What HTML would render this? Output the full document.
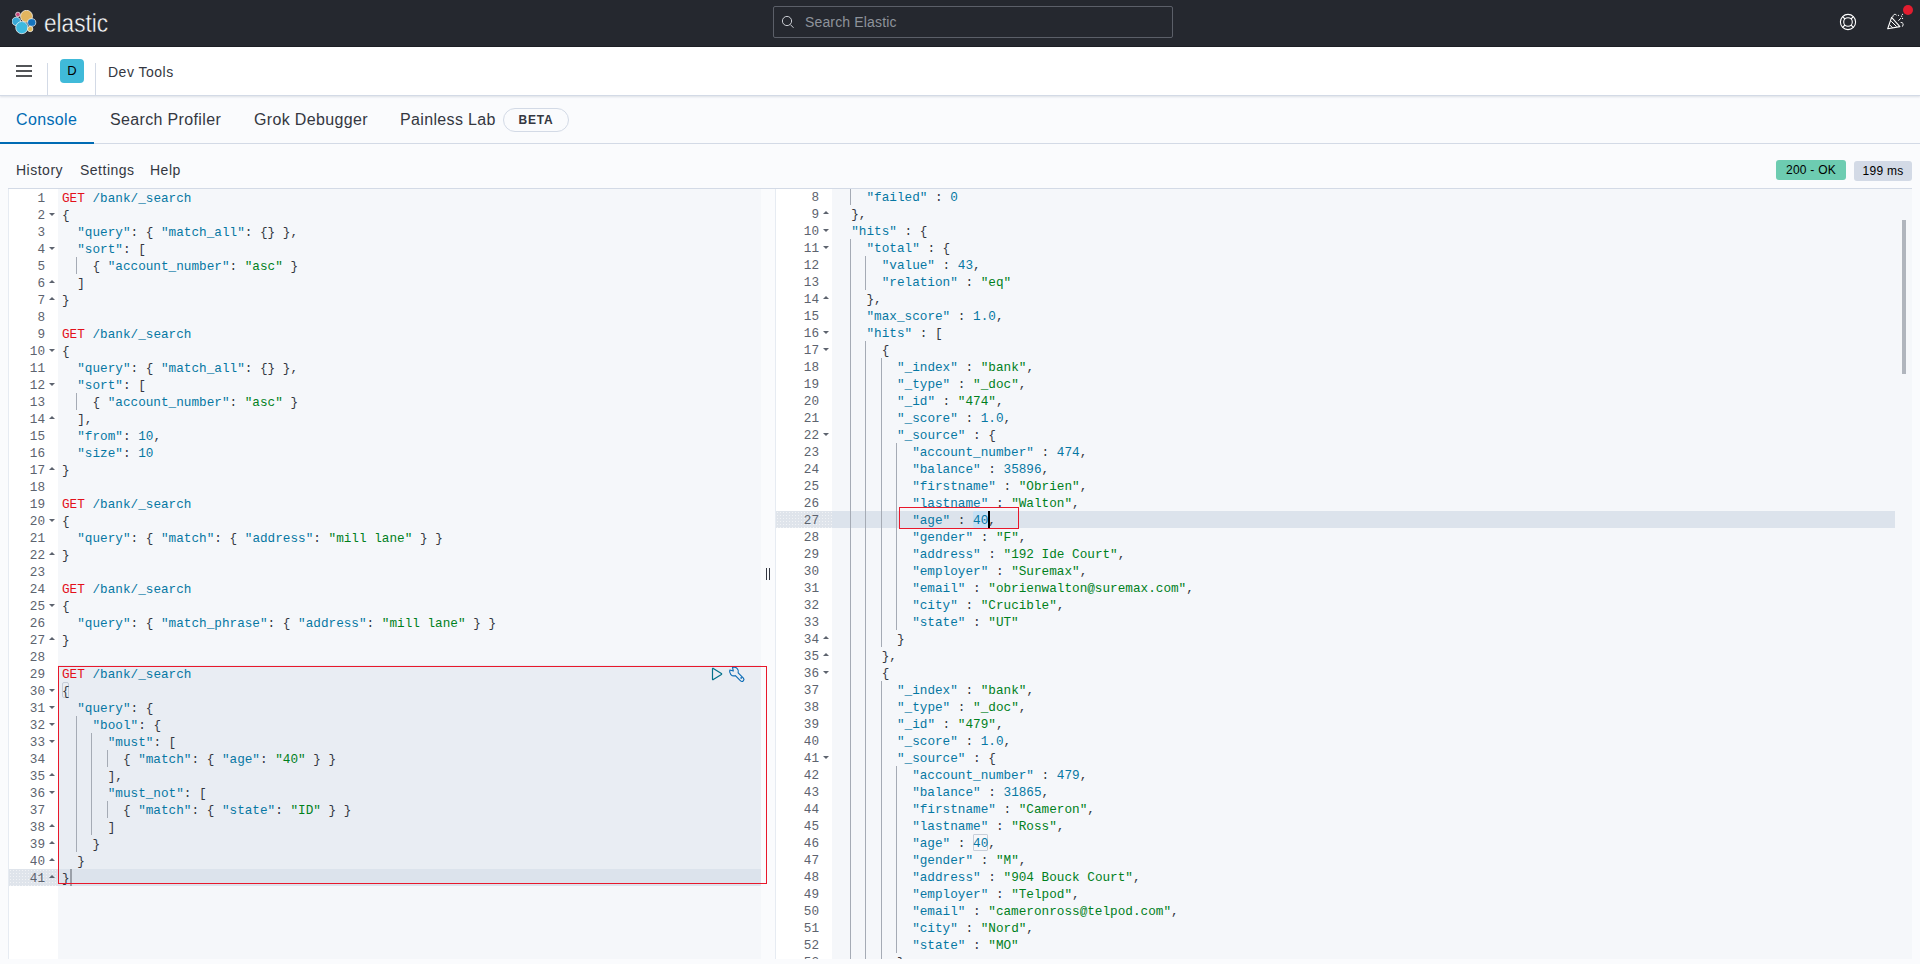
<!DOCTYPE html>
<html><head><meta charset="utf-8">
<style>
*{box-sizing:border-box;margin:0;padding:0}
html,body{width:1920px;height:964px;overflow:hidden;background:#fafbfd;font-family:"Liberation Sans",sans-serif;color:#343741}
.abs{position:absolute}
#hdr{position:absolute;left:0;top:0;width:1920px;height:47px;background:#25282f;border-bottom:1px solid #1a1c21}
#search{position:absolute;left:773px;top:6px;width:400px;height:32px;border:1px solid #5b5f68;border-radius:2px}
#search span{position:absolute;left:31px;top:7px;font-size:14px;letter-spacing:0.15px;color:#8e939b}
#sub{position:absolute;left:0;top:47px;width:1920px;height:49px;background:#fff;border-bottom:1px solid #d3dae6;box-shadow:0 1px 2px rgba(152,162,179,.3)}
.sep{position:absolute;top:16px;width:1px;height:32px;background:#d3dae6}
#tabs div{position:absolute;top:111px;font-size:16px;letter-spacing:0.35px;white-space:nowrap;color:#343741}
.menu{position:absolute;top:162px;font-size:14px;letter-spacing:0.5px;color:#343741;white-space:nowrap}
.badge{position:absolute;font-size:12px;letter-spacing:0.25px;color:#000;text-align:center;border-radius:3px}
.pane{position:absolute;top:189px;height:770px;overflow:hidden}
.gut{position:absolute;left:0;top:0;height:100%;background:#fff}
.code{position:absolute;top:0;height:100%;background:#f5f7fa}
.gl{position:absolute;left:0;width:100%;height:17px;line-height:17px;padding-top:1px;font-family:"Liberation Mono",monospace;font-size:12.7px;color:#5d636e;text-align:right;padding-right:13px}
.gl i{position:absolute;right:3.5px;top:7px;width:0;height:0;border-left:3px solid transparent;border-right:3px solid transparent}
.gl i.fd{border-top:3px solid #5d636e}
.gl i.fu{border-bottom:3px solid #5d636e;top:6px}
.cl{position:absolute;left:4px;height:17px;line-height:17px;padding-top:1px;font-family:"Liberation Mono",monospace;font-size:12.7px;white-space:pre;color:#343741}
.ig{position:absolute;width:1px;height:17px;background:#a5abb5;margin-left:4px}
.tm{color:#e3101a}
.tu,.tk,.tn,.tb{color:#0677a3}
.ts{color:#00801c}

.gdots{background-color:#dfe4eb;background-image:radial-gradient(circle,rgba(255,255,255,.55) 0.6px,transparent 0.9px);background-size:3px 3px}
</style></head><body>
<div id="hdr">
  <svg class="abs" style="left:12px;top:10px" width="26" height="26" viewBox="0 0 26 26">
    <circle cx="14.5" cy="6.3" r="6" fill="#e2b55f" stroke="#fff" stroke-width="0.7"/>
    <ellipse cx="4.3" cy="11.4" rx="4.3" ry="4.2" fill="#38a8d6" stroke="#fff" stroke-width="0.7"/>
    <ellipse cx="19.7" cy="12.5" rx="4.1" ry="3.8" fill="#1473bc" stroke="#fff" stroke-width="0.7"/>
    <circle cx="9.8" cy="17.6" r="6.1" fill="#3db9df" stroke="#fff" stroke-width="0.7"/>
    <circle cx="5.9" cy="4.5" r="2.3" fill="#c5467b" stroke="#fff" stroke-width="0.7"/>
    <circle cx="18.2" cy="19" r="2.7" fill="#dcb75a" stroke="#fff" stroke-width="0.7"/>
  </svg>
  <svg class="abs" style="left:44px;top:8px" width="70" height="30"><text x="0" y="24" font-family="Liberation Sans" font-size="26" fill="#fff" stroke="#25282f" stroke-width="0.45" textLength="64" lengthAdjust="spacingAndGlyphs">elastic</text></svg>
  <div id="search">
    <svg class="abs" style="left:7px;top:8px" width="14" height="14" viewBox="0 0 14 14"><circle cx="6" cy="6" r="4.6" fill="none" stroke="#c9ccd2" stroke-width="1"/><path d="M9.3 9.5 L12.5 12.8" stroke="#c9ccd2" stroke-width="1"/></svg>
    <span>Search Elastic</span>
  </div>
  <svg class="abs" style="left:1839px;top:13px" width="18" height="18" viewBox="0 0 18 18">
    <circle cx="9" cy="9" r="7.6" fill="none" stroke="#fff" stroke-width="1.1"/>
    <circle cx="9" cy="9" r="4.3" fill="none" stroke="#fff" stroke-width="1.1"/>
    <path d="M3.6 3.6 L6 6 M14.4 3.6 L12 6 M3.6 14.4 L6 12 M14.4 14.4 L12 12" stroke="#fff" stroke-width="1.1"/>
  </svg>
  <svg class="abs" style="left:1886px;top:12px" width="20" height="20" viewBox="0 0 20 20">
    <path d="M5.6 5.4 L1.7 16.7 L13.9 14.6 Z" fill="none" stroke="#fff" stroke-width="1.1" stroke-linejoin="round"/>
    <path d="M5.2 9.2 L10.6 14.6 M3.7 12.9 L6.8 15.9" stroke="#fff" stroke-width="1"/>
    <path d="M6.6 5.2 Q7.8 0.6 10.6 3.2" fill="none" stroke="#fff" stroke-width="1"/>
    <path d="M14.6 10.4 Q18.6 10.6 16.4 14.6" fill="none" stroke="#fff" stroke-width="1"/>
    <path d="M12.4 8.8 L14.8 6.2" stroke="#fff" stroke-width="1"/>
    <circle cx="12.5" cy="3.3" r="0.65" fill="#fff"/><circle cx="15.6" cy="4.2" r="0.65" fill="#fff"/><circle cx="16.5" cy="2.3" r="0.65" fill="#fff"/><circle cx="16.5" cy="6.4" r="0.65" fill="#fff"/>
  </svg>
  <div class="abs" style="left:1903px;top:5px;width:10px;height:10px;border-radius:50%;background:#e21d2f"></div>
</div>
<div id="sub">
  <svg class="abs" style="left:16px;top:18px" width="16" height="12" viewBox="0 0 16 12"><path d="M0 1 H16 M0 6 H16 M0 11 H16" stroke="#1a1c21" stroke-width="1.3"/></svg>
  <div class="sep" style="left:47px"></div>
  <div class="abs" style="left:60px;top:12px;width:24px;height:24px;border-radius:4px;background:#40bad9;color:#000;font-size:13px;text-align:center;line-height:24px">D</div>
  <div class="sep" style="left:95px"></div>
  <div class="abs" style="left:108px;top:17px;font-size:14px;letter-spacing:0.5px;color:#343741;white-space:nowrap">Dev Tools</div>
</div>
<div id="tabs">
  <div style="left:16px;color:#006bb4">Console</div>
  <div style="left:110px">Search Profiler</div>
  <div style="left:254px">Grok Debugger</div>
  <div style="left:400px">Painless Lab</div>
</div>
<div class="abs" style="left:503px;top:108px;width:66px;height:24px;border:1px solid #d3dae6;border-radius:12px;font-size:12px;font-weight:bold;text-align:center;line-height:22px;letter-spacing:0.8px;color:#343741">BETA</div>
<div class="abs" style="left:0;top:143px;width:1920px;height:1px;background:#d3dae6"></div>
<div class="abs" style="left:0;top:142px;width:94px;height:2px;background:#006bb4"></div>
<div class="menu" style="left:16px">History</div>
<div class="menu" style="left:80px">Settings</div>
<div class="menu" style="left:150px">Help</div>
<div class="badge" style="left:1776px;top:160px;width:70px;height:20px;line-height:20px;background:#6dccb1">200 - OK</div>
<div class="badge" style="left:1854px;top:161px;width:58px;height:20px;line-height:20px;background:#d3dae6">199 ms</div>
<div class="abs" style="left:8px;top:188px;width:1904px;height:1px;background:#d3dae6"></div>

<!-- left editor -->
<div class="pane" style="left:8px;width:753px;border-left:1px solid #e6ebf2">
  <div class="gut" style="width:49px">
    <div class="abs gdots" style="left:0;top:680px;width:49px;height:17px"></div>
<div class="gl" style="top:0px">1</div>
<div class="gl" style="top:17px">2<i class="fd"></i></div>
<div class="gl" style="top:34px">3</div>
<div class="gl" style="top:51px">4<i class="fd"></i></div>
<div class="gl" style="top:68px">5</div>
<div class="gl" style="top:85px">6<i class="fu"></i></div>
<div class="gl" style="top:102px">7<i class="fu"></i></div>
<div class="gl" style="top:119px">8</div>
<div class="gl" style="top:136px">9</div>
<div class="gl" style="top:153px">10<i class="fd"></i></div>
<div class="gl" style="top:170px">11</div>
<div class="gl" style="top:187px">12<i class="fd"></i></div>
<div class="gl" style="top:204px">13</div>
<div class="gl" style="top:221px">14<i class="fu"></i></div>
<div class="gl" style="top:238px">15</div>
<div class="gl" style="top:255px">16</div>
<div class="gl" style="top:272px">17<i class="fu"></i></div>
<div class="gl" style="top:289px">18</div>
<div class="gl" style="top:306px">19</div>
<div class="gl" style="top:323px">20<i class="fd"></i></div>
<div class="gl" style="top:340px">21</div>
<div class="gl" style="top:357px">22<i class="fu"></i></div>
<div class="gl" style="top:374px">23</div>
<div class="gl" style="top:391px">24</div>
<div class="gl" style="top:408px">25<i class="fd"></i></div>
<div class="gl" style="top:425px">26</div>
<div class="gl" style="top:442px">27<i class="fu"></i></div>
<div class="gl" style="top:459px">28</div>
<div class="gl" style="top:476px">29</div>
<div class="gl" style="top:493px">30<i class="fd"></i></div>
<div class="gl" style="top:510px">31<i class="fd"></i></div>
<div class="gl" style="top:527px">32<i class="fd"></i></div>
<div class="gl" style="top:544px">33<i class="fd"></i></div>
<div class="gl" style="top:561px">34</div>
<div class="gl" style="top:578px">35<i class="fu"></i></div>
<div class="gl" style="top:595px">36<i class="fd"></i></div>
<div class="gl" style="top:612px">37</div>
<div class="gl" style="top:629px">38<i class="fu"></i></div>
<div class="gl" style="top:646px">39<i class="fu"></i></div>
<div class="gl" style="top:663px">40<i class="fu"></i></div>
<div class="gl" style="top:680px">41<i class="fu"></i></div>
  </div>
  <div class="code" style="left:49px;width:704px">
    <div class="abs" style="left:0;top:476px;width:704px;height:221px;background:#e9edf3"></div>
    <div class="abs" style="left:0;top:680px;width:704px;height:17px;background:#dce3ec"></div>
    <div class="abs" style="left:3.5px;top:492.5px;width:7.5px;height:16.5px;border:1px solid #c5ccd7;border-radius:2px"></div>
    <div class="abs" style="left:12px;top:680px;width:2px;height:17px;background:#9aa0a9"></div>
<div class="cl" style="top:0px"><span class="tm">GET</span> <span class="tu">/bank/_search</span></div>
<div class="cl" style="top:17px">{</div>
<div class="cl" style="top:34px">  <span class="tk">&quot;query&quot;</span>: { <span class="tk">&quot;match_all&quot;</span>: {} },</div>
<div class="cl" style="top:51px">  <span class="tk">&quot;sort&quot;</span>: [</div>
<b class="ig" style="top:68px;left:14.23px"></b>
<div class="cl" style="top:68px">    { <span class="tk">&quot;account_number&quot;</span>: <span class="ts">&quot;asc&quot;</span> }</div>
<div class="cl" style="top:85px">  ]</div>
<div class="cl" style="top:102px">}</div>
<div class="cl" style="top:119px"></div>
<div class="cl" style="top:136px"><span class="tm">GET</span> <span class="tu">/bank/_search</span></div>
<div class="cl" style="top:153px">{</div>
<div class="cl" style="top:170px">  <span class="tk">&quot;query&quot;</span>: { <span class="tk">&quot;match_all&quot;</span>: {} },</div>
<div class="cl" style="top:187px">  <span class="tk">&quot;sort&quot;</span>: [</div>
<b class="ig" style="top:204px;left:14.23px"></b>
<div class="cl" style="top:204px">    { <span class="tk">&quot;account_number&quot;</span>: <span class="ts">&quot;asc&quot;</span> }</div>
<div class="cl" style="top:221px">  ],</div>
<div class="cl" style="top:238px">  <span class="tk">&quot;from&quot;</span>: <span class="tn">10</span>,</div>
<div class="cl" style="top:255px">  <span class="tk">&quot;size&quot;</span>: <span class="tn">10</span></div>
<div class="cl" style="top:272px">}</div>
<div class="cl" style="top:289px"></div>
<div class="cl" style="top:306px"><span class="tm">GET</span> <span class="tu">/bank/_search</span></div>
<div class="cl" style="top:323px">{</div>
<div class="cl" style="top:340px">  <span class="tk">&quot;query&quot;</span>: { <span class="tk">&quot;match&quot;</span>: { <span class="tk">&quot;address&quot;</span>: <span class="ts">&quot;mill lane&quot;</span> } }</div>
<div class="cl" style="top:357px">}</div>
<div class="cl" style="top:374px"></div>
<div class="cl" style="top:391px"><span class="tm">GET</span> <span class="tu">/bank/_search</span></div>
<div class="cl" style="top:408px">{</div>
<div class="cl" style="top:425px">  <span class="tk">&quot;query&quot;</span>: { <span class="tk">&quot;match_phrase&quot;</span>: { <span class="tk">&quot;address&quot;</span>: <span class="ts">&quot;mill lane&quot;</span> } }</div>
<div class="cl" style="top:442px">}</div>
<div class="cl" style="top:459px"></div>
<div class="cl" style="top:476px"><span class="tm">GET</span> <span class="tu">/bank/_search</span></div>
<div class="cl" style="top:493px">{</div>
<div class="cl" style="top:510px">  <span class="tk">&quot;query&quot;</span>: {</div>
<b class="ig" style="top:527px;left:14.23px"></b>
<div class="cl" style="top:527px">    <span class="tk">&quot;bool&quot;</span>: {</div>
<b class="ig" style="top:544px;left:14.23px"></b>
<b class="ig" style="top:544px;left:29.46px"></b>
<div class="cl" style="top:544px">      <span class="tk">&quot;must&quot;</span>: [</div>
<b class="ig" style="top:561px;left:14.23px"></b>
<b class="ig" style="top:561px;left:29.46px"></b>
<b class="ig" style="top:561px;left:44.70px"></b>
<div class="cl" style="top:561px">        { <span class="tk">&quot;match&quot;</span>: { <span class="tk">&quot;age&quot;</span>: <span class="ts">&quot;40&quot;</span> } }</div>
<b class="ig" style="top:578px;left:14.23px"></b>
<b class="ig" style="top:578px;left:29.46px"></b>
<div class="cl" style="top:578px">      ],</div>
<b class="ig" style="top:595px;left:14.23px"></b>
<b class="ig" style="top:595px;left:29.46px"></b>
<div class="cl" style="top:595px">      <span class="tk">&quot;must_not&quot;</span>: [</div>
<b class="ig" style="top:612px;left:14.23px"></b>
<b class="ig" style="top:612px;left:29.46px"></b>
<b class="ig" style="top:612px;left:44.70px"></b>
<div class="cl" style="top:612px">        { <span class="tk">&quot;match&quot;</span>: { <span class="tk">&quot;state&quot;</span>: <span class="ts">&quot;ID&quot;</span> } }</div>
<b class="ig" style="top:629px;left:14.23px"></b>
<b class="ig" style="top:629px;left:29.46px"></b>
<div class="cl" style="top:629px">      ]</div>
<b class="ig" style="top:646px;left:14.23px"></b>
<div class="cl" style="top:646px">    }</div>
<div class="cl" style="top:663px">  }</div>
<div class="cl" style="top:680px">}</div>
  </div>
</div>
<!-- splitter -->
<div class="abs" style="left:766px;top:568px;width:1.3px;height:12px;background:#343741"></div>
<div class="abs" style="left:769px;top:568px;width:1.3px;height:12px;background:#343741"></div>
<!-- right output -->
<div class="pane" style="left:775px;top:189px;width:1137px;height:770px;border-left:1px solid #e6ebf2">
  <div class="gut" style="width:56px">
    <div class="abs gdots" style="left:0;top:322px;width:56px;height:17px"></div>
<div class="gl" style="top:-1px">8</div>
<div class="gl" style="top:16px">9<i class="fu"></i></div>
<div class="gl" style="top:33px">10<i class="fd"></i></div>
<div class="gl" style="top:50px">11<i class="fd"></i></div>
<div class="gl" style="top:67px">12</div>
<div class="gl" style="top:84px">13</div>
<div class="gl" style="top:101px">14<i class="fu"></i></div>
<div class="gl" style="top:118px">15</div>
<div class="gl" style="top:135px">16<i class="fd"></i></div>
<div class="gl" style="top:152px">17<i class="fd"></i></div>
<div class="gl" style="top:169px">18</div>
<div class="gl" style="top:186px">19</div>
<div class="gl" style="top:203px">20</div>
<div class="gl" style="top:220px">21</div>
<div class="gl" style="top:237px">22<i class="fd"></i></div>
<div class="gl" style="top:254px">23</div>
<div class="gl" style="top:271px">24</div>
<div class="gl" style="top:288px">25</div>
<div class="gl" style="top:305px">26</div>
<div class="gl" style="top:322px">27</div>
<div class="gl" style="top:339px">28</div>
<div class="gl" style="top:356px">29</div>
<div class="gl" style="top:373px">30</div>
<div class="gl" style="top:390px">31</div>
<div class="gl" style="top:407px">32</div>
<div class="gl" style="top:424px">33</div>
<div class="gl" style="top:441px">34<i class="fu"></i></div>
<div class="gl" style="top:458px">35<i class="fu"></i></div>
<div class="gl" style="top:475px">36<i class="fd"></i></div>
<div class="gl" style="top:492px">37</div>
<div class="gl" style="top:509px">38</div>
<div class="gl" style="top:526px">39</div>
<div class="gl" style="top:543px">40</div>
<div class="gl" style="top:560px">41<i class="fd"></i></div>
<div class="gl" style="top:577px">42</div>
<div class="gl" style="top:594px">43</div>
<div class="gl" style="top:611px">44</div>
<div class="gl" style="top:628px">45</div>
<div class="gl" style="top:645px">46</div>
<div class="gl" style="top:662px">47</div>
<div class="gl" style="top:679px">48</div>
<div class="gl" style="top:696px">49</div>
<div class="gl" style="top:713px">50</div>
<div class="gl" style="top:730px">51</div>
<div class="gl" style="top:747px">52</div>
<div class="gl" style="top:764px">53</div>
<div class="gl" style="top:781px">54</div>
  </div>
  <div class="code" style="left:56px;width:1080px">
    <div class="abs" style="left:0;top:322px;width:1063px;height:17px;background:#dce3ec"></div>
    <div class="abs" style="left:141px;top:322px;width:15.3px;height:17px;background:#c6e1f5;border-radius:2px"></div>
    <div class="abs" style="left:141px;top:645px;width:15.3px;height:17px;border:1px solid #c8cfd9;border-radius:1px"></div>
<b class="ig" style="top:-1px;left:14.23px"></b>
<div class="cl" style="top:-1px">    <span class="tk">&quot;failed&quot;</span> : <span class="tn">0</span></div>
<div class="cl" style="top:16px">  },</div>
<div class="cl" style="top:33px">  <span class="tk">&quot;hits&quot;</span> : {</div>
<b class="ig" style="top:50px;left:14.23px"></b>
<div class="cl" style="top:50px">    <span class="tk">&quot;total&quot;</span> : {</div>
<b class="ig" style="top:67px;left:14.23px"></b>
<b class="ig" style="top:67px;left:29.46px"></b>
<div class="cl" style="top:67px">      <span class="tk">&quot;value&quot;</span> : <span class="tn">43</span>,</div>
<b class="ig" style="top:84px;left:14.23px"></b>
<b class="ig" style="top:84px;left:29.46px"></b>
<div class="cl" style="top:84px">      <span class="tk">&quot;relation&quot;</span> : <span class="ts">&quot;eq&quot;</span></div>
<b class="ig" style="top:101px;left:14.23px"></b>
<div class="cl" style="top:101px">    },</div>
<b class="ig" style="top:118px;left:14.23px"></b>
<div class="cl" style="top:118px">    <span class="tk">&quot;max_score&quot;</span> : <span class="tn">1.0</span>,</div>
<b class="ig" style="top:135px;left:14.23px"></b>
<div class="cl" style="top:135px">    <span class="tk">&quot;hits&quot;</span> : [</div>
<b class="ig" style="top:152px;left:14.23px"></b>
<b class="ig" style="top:152px;left:29.46px"></b>
<div class="cl" style="top:152px">      {</div>
<b class="ig" style="top:169px;left:14.23px"></b>
<b class="ig" style="top:169px;left:29.46px"></b>
<b class="ig" style="top:169px;left:44.70px"></b>
<div class="cl" style="top:169px">        <span class="tk">&quot;_index&quot;</span> : <span class="ts">&quot;bank&quot;</span>,</div>
<b class="ig" style="top:186px;left:14.23px"></b>
<b class="ig" style="top:186px;left:29.46px"></b>
<b class="ig" style="top:186px;left:44.70px"></b>
<div class="cl" style="top:186px">        <span class="tk">&quot;_type&quot;</span> : <span class="ts">&quot;_doc&quot;</span>,</div>
<b class="ig" style="top:203px;left:14.23px"></b>
<b class="ig" style="top:203px;left:29.46px"></b>
<b class="ig" style="top:203px;left:44.70px"></b>
<div class="cl" style="top:203px">        <span class="tk">&quot;_id&quot;</span> : <span class="ts">&quot;474&quot;</span>,</div>
<b class="ig" style="top:220px;left:14.23px"></b>
<b class="ig" style="top:220px;left:29.46px"></b>
<b class="ig" style="top:220px;left:44.70px"></b>
<div class="cl" style="top:220px">        <span class="tk">&quot;_score&quot;</span> : <span class="tn">1.0</span>,</div>
<b class="ig" style="top:237px;left:14.23px"></b>
<b class="ig" style="top:237px;left:29.46px"></b>
<b class="ig" style="top:237px;left:44.70px"></b>
<div class="cl" style="top:237px">        <span class="tk">&quot;_source&quot;</span> : {</div>
<b class="ig" style="top:254px;left:14.23px"></b>
<b class="ig" style="top:254px;left:29.46px"></b>
<b class="ig" style="top:254px;left:44.70px"></b>
<b class="ig" style="top:254px;left:59.93px"></b>
<div class="cl" style="top:254px">          <span class="tk">&quot;account_number&quot;</span> : <span class="tn">474</span>,</div>
<b class="ig" style="top:271px;left:14.23px"></b>
<b class="ig" style="top:271px;left:29.46px"></b>
<b class="ig" style="top:271px;left:44.70px"></b>
<b class="ig" style="top:271px;left:59.93px"></b>
<div class="cl" style="top:271px">          <span class="tk">&quot;balance&quot;</span> : <span class="tn">35896</span>,</div>
<b class="ig" style="top:288px;left:14.23px"></b>
<b class="ig" style="top:288px;left:29.46px"></b>
<b class="ig" style="top:288px;left:44.70px"></b>
<b class="ig" style="top:288px;left:59.93px"></b>
<div class="cl" style="top:288px">          <span class="tk">&quot;firstname&quot;</span> : <span class="ts">&quot;Obrien&quot;</span>,</div>
<b class="ig" style="top:305px;left:14.23px"></b>
<b class="ig" style="top:305px;left:29.46px"></b>
<b class="ig" style="top:305px;left:44.70px"></b>
<b class="ig" style="top:305px;left:59.93px"></b>
<div class="cl" style="top:305px">          <span class="tk">&quot;lastname&quot;</span> : <span class="ts">&quot;Walton&quot;</span>,</div>
<b class="ig" style="top:322px;left:14.23px"></b>
<b class="ig" style="top:322px;left:29.46px"></b>
<b class="ig" style="top:322px;left:44.70px"></b>
<b class="ig" style="top:322px;left:59.93px"></b>
<div class="cl" style="top:322px">          <span class="tk">&quot;age&quot;</span> : <span class="tn">40</span>,</div>
<b class="ig" style="top:339px;left:14.23px"></b>
<b class="ig" style="top:339px;left:29.46px"></b>
<b class="ig" style="top:339px;left:44.70px"></b>
<b class="ig" style="top:339px;left:59.93px"></b>
<div class="cl" style="top:339px">          <span class="tk">&quot;gender&quot;</span> : <span class="ts">&quot;F&quot;</span>,</div>
<b class="ig" style="top:356px;left:14.23px"></b>
<b class="ig" style="top:356px;left:29.46px"></b>
<b class="ig" style="top:356px;left:44.70px"></b>
<b class="ig" style="top:356px;left:59.93px"></b>
<div class="cl" style="top:356px">          <span class="tk">&quot;address&quot;</span> : <span class="ts">&quot;192 Ide Court&quot;</span>,</div>
<b class="ig" style="top:373px;left:14.23px"></b>
<b class="ig" style="top:373px;left:29.46px"></b>
<b class="ig" style="top:373px;left:44.70px"></b>
<b class="ig" style="top:373px;left:59.93px"></b>
<div class="cl" style="top:373px">          <span class="tk">&quot;employer&quot;</span> : <span class="ts">&quot;Suremax&quot;</span>,</div>
<b class="ig" style="top:390px;left:14.23px"></b>
<b class="ig" style="top:390px;left:29.46px"></b>
<b class="ig" style="top:390px;left:44.70px"></b>
<b class="ig" style="top:390px;left:59.93px"></b>
<div class="cl" style="top:390px">          <span class="tk">&quot;email&quot;</span> : <span class="ts">&quot;obrienwalton@suremax.com&quot;</span>,</div>
<b class="ig" style="top:407px;left:14.23px"></b>
<b class="ig" style="top:407px;left:29.46px"></b>
<b class="ig" style="top:407px;left:44.70px"></b>
<b class="ig" style="top:407px;left:59.93px"></b>
<div class="cl" style="top:407px">          <span class="tk">&quot;city&quot;</span> : <span class="ts">&quot;Crucible&quot;</span>,</div>
<b class="ig" style="top:424px;left:14.23px"></b>
<b class="ig" style="top:424px;left:29.46px"></b>
<b class="ig" style="top:424px;left:44.70px"></b>
<b class="ig" style="top:424px;left:59.93px"></b>
<div class="cl" style="top:424px">          <span class="tk">&quot;state&quot;</span> : <span class="ts">&quot;UT&quot;</span></div>
<b class="ig" style="top:441px;left:14.23px"></b>
<b class="ig" style="top:441px;left:29.46px"></b>
<b class="ig" style="top:441px;left:44.70px"></b>
<div class="cl" style="top:441px">        }</div>
<b class="ig" style="top:458px;left:14.23px"></b>
<b class="ig" style="top:458px;left:29.46px"></b>
<div class="cl" style="top:458px">      },</div>
<b class="ig" style="top:475px;left:14.23px"></b>
<b class="ig" style="top:475px;left:29.46px"></b>
<div class="cl" style="top:475px">      {</div>
<b class="ig" style="top:492px;left:14.23px"></b>
<b class="ig" style="top:492px;left:29.46px"></b>
<b class="ig" style="top:492px;left:44.70px"></b>
<div class="cl" style="top:492px">        <span class="tk">&quot;_index&quot;</span> : <span class="ts">&quot;bank&quot;</span>,</div>
<b class="ig" style="top:509px;left:14.23px"></b>
<b class="ig" style="top:509px;left:29.46px"></b>
<b class="ig" style="top:509px;left:44.70px"></b>
<div class="cl" style="top:509px">        <span class="tk">&quot;_type&quot;</span> : <span class="ts">&quot;_doc&quot;</span>,</div>
<b class="ig" style="top:526px;left:14.23px"></b>
<b class="ig" style="top:526px;left:29.46px"></b>
<b class="ig" style="top:526px;left:44.70px"></b>
<div class="cl" style="top:526px">        <span class="tk">&quot;_id&quot;</span> : <span class="ts">&quot;479&quot;</span>,</div>
<b class="ig" style="top:543px;left:14.23px"></b>
<b class="ig" style="top:543px;left:29.46px"></b>
<b class="ig" style="top:543px;left:44.70px"></b>
<div class="cl" style="top:543px">        <span class="tk">&quot;_score&quot;</span> : <span class="tn">1.0</span>,</div>
<b class="ig" style="top:560px;left:14.23px"></b>
<b class="ig" style="top:560px;left:29.46px"></b>
<b class="ig" style="top:560px;left:44.70px"></b>
<div class="cl" style="top:560px">        <span class="tk">&quot;_source&quot;</span> : {</div>
<b class="ig" style="top:577px;left:14.23px"></b>
<b class="ig" style="top:577px;left:29.46px"></b>
<b class="ig" style="top:577px;left:44.70px"></b>
<b class="ig" style="top:577px;left:59.93px"></b>
<div class="cl" style="top:577px">          <span class="tk">&quot;account_number&quot;</span> : <span class="tn">479</span>,</div>
<b class="ig" style="top:594px;left:14.23px"></b>
<b class="ig" style="top:594px;left:29.46px"></b>
<b class="ig" style="top:594px;left:44.70px"></b>
<b class="ig" style="top:594px;left:59.93px"></b>
<div class="cl" style="top:594px">          <span class="tk">&quot;balance&quot;</span> : <span class="tn">31865</span>,</div>
<b class="ig" style="top:611px;left:14.23px"></b>
<b class="ig" style="top:611px;left:29.46px"></b>
<b class="ig" style="top:611px;left:44.70px"></b>
<b class="ig" style="top:611px;left:59.93px"></b>
<div class="cl" style="top:611px">          <span class="tk">&quot;firstname&quot;</span> : <span class="ts">&quot;Cameron&quot;</span>,</div>
<b class="ig" style="top:628px;left:14.23px"></b>
<b class="ig" style="top:628px;left:29.46px"></b>
<b class="ig" style="top:628px;left:44.70px"></b>
<b class="ig" style="top:628px;left:59.93px"></b>
<div class="cl" style="top:628px">          <span class="tk">&quot;lastname&quot;</span> : <span class="ts">&quot;Ross&quot;</span>,</div>
<b class="ig" style="top:645px;left:14.23px"></b>
<b class="ig" style="top:645px;left:29.46px"></b>
<b class="ig" style="top:645px;left:44.70px"></b>
<b class="ig" style="top:645px;left:59.93px"></b>
<div class="cl" style="top:645px">          <span class="tk">&quot;age&quot;</span> : <span class="tn">40</span>,</div>
<b class="ig" style="top:662px;left:14.23px"></b>
<b class="ig" style="top:662px;left:29.46px"></b>
<b class="ig" style="top:662px;left:44.70px"></b>
<b class="ig" style="top:662px;left:59.93px"></b>
<div class="cl" style="top:662px">          <span class="tk">&quot;gender&quot;</span> : <span class="ts">&quot;M&quot;</span>,</div>
<b class="ig" style="top:679px;left:14.23px"></b>
<b class="ig" style="top:679px;left:29.46px"></b>
<b class="ig" style="top:679px;left:44.70px"></b>
<b class="ig" style="top:679px;left:59.93px"></b>
<div class="cl" style="top:679px">          <span class="tk">&quot;address&quot;</span> : <span class="ts">&quot;904 Bouck Court&quot;</span>,</div>
<b class="ig" style="top:696px;left:14.23px"></b>
<b class="ig" style="top:696px;left:29.46px"></b>
<b class="ig" style="top:696px;left:44.70px"></b>
<b class="ig" style="top:696px;left:59.93px"></b>
<div class="cl" style="top:696px">          <span class="tk">&quot;employer&quot;</span> : <span class="ts">&quot;Telpod&quot;</span>,</div>
<b class="ig" style="top:713px;left:14.23px"></b>
<b class="ig" style="top:713px;left:29.46px"></b>
<b class="ig" style="top:713px;left:44.70px"></b>
<b class="ig" style="top:713px;left:59.93px"></b>
<div class="cl" style="top:713px">          <span class="tk">&quot;email&quot;</span> : <span class="ts">&quot;cameronross@telpod.com&quot;</span>,</div>
<b class="ig" style="top:730px;left:14.23px"></b>
<b class="ig" style="top:730px;left:29.46px"></b>
<b class="ig" style="top:730px;left:44.70px"></b>
<b class="ig" style="top:730px;left:59.93px"></b>
<div class="cl" style="top:730px">          <span class="tk">&quot;city&quot;</span> : <span class="ts">&quot;Nord&quot;</span>,</div>
<b class="ig" style="top:747px;left:14.23px"></b>
<b class="ig" style="top:747px;left:29.46px"></b>
<b class="ig" style="top:747px;left:44.70px"></b>
<b class="ig" style="top:747px;left:59.93px"></b>
<div class="cl" style="top:747px">          <span class="tk">&quot;state&quot;</span> : <span class="ts">&quot;MO&quot;</span></div>
<b class="ig" style="top:764px;left:14.23px"></b>
<b class="ig" style="top:764px;left:29.46px"></b>
<b class="ig" style="top:764px;left:44.70px"></b>
<div class="cl" style="top:764px">        }</div>
<b class="ig" style="top:781px;left:14.23px"></b>
<b class="ig" style="top:781px;left:29.46px"></b>
<div class="cl" style="top:781px">      }</div>
  </div>
</div>
<!-- overlays -->
<div class="abs" style="left:988px;top:511px;width:2px;height:17px;background:#000"></div>
<div class="abs" style="left:1902px;top:220px;width:4px;height:154px;background:#b0b5bd"></div>
<svg class="abs" style="left:706px;top:662px" width="44" height="24" viewBox="0 0 44 24">
  <path d="M6.5 6.8 L6.5 17.2 Q6.5 18 7.3 17.6 L15.4 12.5 Q16 12 15.4 11.5 L7.3 6.4 Q6.5 6 6.5 6.8 Z" fill="none" stroke="#02718a" stroke-width="1.2" stroke-linejoin="round"/>
  <path d="M29.36 13.68 A4.4 4.4 0 0 1 23.87 8.0 L27.3 9.0 L26.5 5.37 A4.4 4.4 0 0 1 32.18 10.86 L37.41 16.09 A2 2 0 0 1 34.59 18.91 Z" fill="none" stroke="#0a6bb5" stroke-width="1.15" stroke-linejoin="round"/>
  <circle cx="35.2" cy="15.9" r="0.85" fill="#0a6bb5"/>
</svg>
<div class="abs" style="left:58px;top:666px;width:709px;height:218px;border:1px solid #e8182b"></div>
<div class="abs" style="left:899px;top:507px;width:120px;height:22px;border:1px solid #e8182b"></div>
</body></html>
